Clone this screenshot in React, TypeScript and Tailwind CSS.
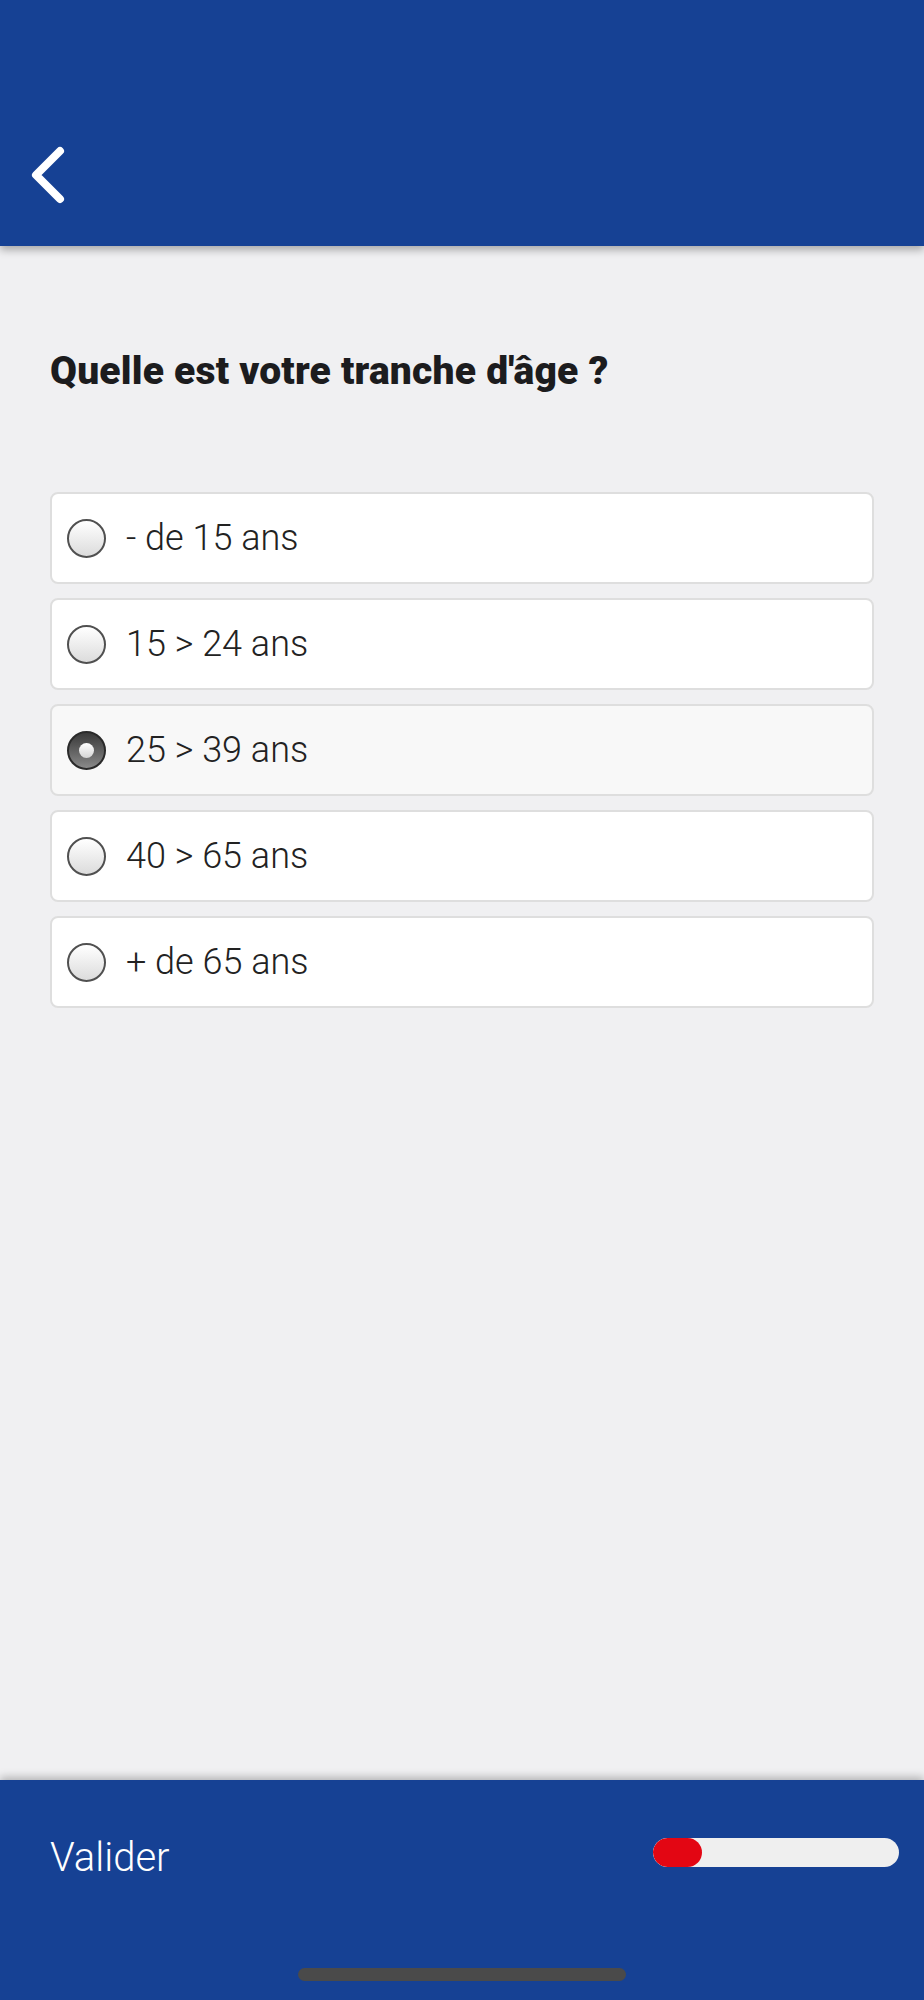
import React, { useState } from 'react';

const options = ['- de 15 ans', '15 > 24 ans', '25 > 39 ans', '40 > 65 ans', '+ de 65 ans'];

const Radio = ({ checked }: { checked: boolean }) =>
  checked ? (
    <span className="flex h-[39px] w-[39px] shrink-0 items-center justify-center rounded-full border-2 border-[#2a2a2a] bg-gradient-to-b from-[#3a3a3a] to-[#8a8a8a]">
      <span className="h-[15px] w-[15px] rounded-full bg-gradient-to-b from-white to-[#d4d4d4]" />
    </span>
  ) : (
    <span className="h-[39px] w-[39px] shrink-0 rounded-full border-[2.5px] border-[#505050] bg-gradient-to-b from-white to-[#dcdcdc]" />
  );

export default function App() {
  const [selected, setSelected] = useState(2);

  return (
    <div className="flex h-[2000px] w-full flex-col bg-[#f0f0f2] font-['Roboto',sans-serif]">
      {/* Header */}
      <div className="relative z-10 flex h-[246px] shrink-0 items-end bg-[#164194] pb-[42px] pl-[29px] shadow-[0_4px_8px_rgba(0,0,0,0.3)]">
        <svg width="36" height="58" viewBox="0 0 36 58" fill="none">
          <path d="M31 5 L7 29 L31 53" stroke="white" strokeWidth="8" strokeLinecap="round" strokeLinejoin="round" />
        </svg>
      </div>

      {/* Content */}
      <div className="flex-1 px-[50px] pt-[100px]">
        <h1 className="text-[39px] font-black leading-[50px] tracking-[0.2px] text-[#1c1c1e]">
          Quelle est votre tranche d'âge ?
        </h1>
        <div className="mt-[96px] flex flex-col gap-[14px]">
          {options.map((o, i) => (
            <button
              key={o}
              onClick={() => setSelected(i)}
              className={`flex h-[92px] items-center gap-[20px] rounded-[8px] border-2 border-[#dedede] pl-[15px] text-left ${
                selected === i ? 'bg-[#f8f8f8]' : 'bg-white'
              }`}
            >
              <Radio checked={selected === i} />
              <span className="text-[36px] font-light text-[#222]">{o}</span>
            </button>
          ))}
        </div>
      </div>

      {/* Footer */}
      <div className="relative z-10 h-[220px] shrink-0 bg-[#164194] pl-[50px] pr-[25px] pt-[48px] shadow-[0_-3px_8px_rgba(0,0,0,0.25)]">
        <div className="flex h-[60px] items-center justify-between">
          <span className="text-[40px] font-light text-white">Valider</span>
          <div className="mb-[12px] h-[29px] w-[246px] overflow-hidden rounded-full bg-[#efefef]">
            <div className="h-full w-[49px] rounded-full bg-[#e30613]" />
          </div>
        </div>
        <div className="absolute bottom-[19px] left-1/2 h-[13px] w-[328px] -translate-x-1/2 rounded-full bg-[#4a4a4a]" />
      </div>
    </div>
  );
}
